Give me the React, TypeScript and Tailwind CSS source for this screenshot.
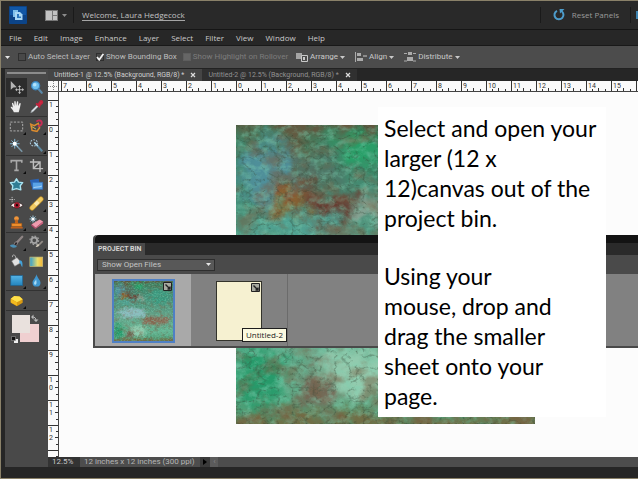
import React from 'react';
import clsx from 'clsx';

const MENUS = ['File', 'Edit', 'Image', 'Enhance', 'Layer', 'Select', 'Filter', 'View', 'Window', 'Help'];

type Tool = { name: string; more?: boolean; active?: boolean; icon: React.ReactNode };

const TOOL_GROUPS: Tool[][] = [
  [
    {
      name: 'Move', active: true, icon: (
        <>
          <path d="M2 1v10l2.800-2.500 4-.4z" fill="#b4b4b4" />
          <path d="M8 11h8M12 7v8" stroke="#c4c4c4" strokeWidth="1" />
          <path d="M12 6l1.800 2h-3.600zM12 16l1.800-2h-3.600zM7 11l2-1.800v3.600zM17 11l-2-1.800v3.600z" fill="#c4c4c4" />
        </>
      ),
    },
    {
      name: 'Zoom', icon: (
        <>
          <path d="M10.500 10l4 4.500" stroke="#5a88a8" strokeWidth="2.400" strokeLinecap="round" />
          <circle cx="7.500" cy="6.500" r="4.600" fill="#6fc0ee" stroke="#3a83bd" strokeWidth="1.400" />
          <circle cx="6.500" cy="5.500" r="2" fill="#b5e2fa" />
        </>
      ),
    },
    {
      name: 'Hand', icon: (
        <path d="M5.500 15C4.500 12.500 2.500 11 1.800 9.200c.8-.8 1.700-.3 2.700.8L3.300 5c.1-1 1.200-1 1.500-.1L6 8V3c.2-1 1.400-1 1.600 0l.4 4.600L9 3.200c.4-.9 1.500-.6 1.500.3L10.300 8l1.500-3c.6-.8 1.600-.3 1.400.6-.5 2.400-.7 4.700-1.500 6.900L11 15z" fill="#ededed" />
      ),
    },
    {
      name: 'Eyedropper', icon: (
        <>
          <path d="M9 7L3 13l-1 2.500L4.500 14.500l6-6z" fill="#dfe6ea" stroke="#8a9298" strokeWidth=".6" />
          <path d="M8 5l4.500 4.500M10 6.500l3-4c1-1.200 3 .4 2 1.900l-3.500 3.400z" fill="#d8304a" stroke="#c2233d" strokeWidth="1.800" />
        </>
      ),
    },
  ],
  [
    { name: 'Marquee', more: true, icon: <rect x="1.500" y="3.500" width="14" height="10" fill="none" stroke="#b8b8b8" strokeDasharray="2.500 1.500" /> },
    {
      name: 'Lasso', more: true, icon: (
        <>
          <path d="M2 6l4 1.500L10.500 5 12 10l-3 4-5.500-1z" fill="none" stroke="#dd8c2e" strokeWidth="1.700" />
          <path d="M8.500 3c2-2.500 6-1.500 6 1.500 0 2.500-2.500 3.500-4.500 3" fill="none" stroke="#c52e55" strokeWidth="2.200" />
          <path d="M3 8.500l5 3" stroke="#e8cb5a" strokeWidth="1" />
        </>
      ),
    },
    {
      name: 'Magic Wand', icon: (
        <>
          <path d="M7 7l8 8.500" stroke="#7b98a8" strokeWidth="1.800" />
          <path d="M6.500 1v11M1 6.500h11M2.800 2.800l7.400 7.400M10.200 2.800l-7.400 7.400" stroke="#8fd3f5" strokeWidth=".9" />
          <circle cx="6.500" cy="6.500" r="2.300" fill="#fff" />
        </>
      ),
    },
    {
      name: 'Quick Selection', more: true, icon: (
        <>
          <ellipse cx="5.500" cy="5.500" rx="4" ry="3.500" fill="none" stroke="#a9c8da" strokeWidth="1.200" strokeDasharray="2 1.300" />
          <path d="M6 5l9 10" stroke="#5d88a0" strokeWidth="2.400" />
          <path d="M6 5l4 4" stroke="#bfe0f2" strokeWidth="1.400" />
        </>
      ),
    },
  ],
  [
    { name: 'Type', more: true, icon: <path d="M2.500 5.500V3h12v2.500M8.500 3v11M6 14h5" fill="none" stroke="#a9a9a9" strokeWidth="1.800" /> },
    { name: 'Crop', more: true, icon: <path d="M5 1v11h11M1 4.500h11.500V16M5 12l7.500-7.500" fill="none" stroke="#bdbdbd" strokeWidth="1.600" /> },
    {
      name: 'Cookie Cutter', icon: (
        <path d="M8.500 2l2.200 3.800 4.800.6-2.800 3.500.7 4.700-4.900-1.500-4.900 1.500.7-4.700L1.500 6.400l4.800-.6z" fill="#2f7d94" stroke="#a9e3f1" strokeWidth="1.600" strokeLinejoin="round" />
      ),
    },
    {
      name: 'Straighten', icon: (
        <>
          <path d="M1 3.500l10-1.500 1 8-9 1z" fill="#2b63b3" />
          <path d="M4 6h11.500v8H4z" fill="#5aa3e6" stroke="#2f6cbc" strokeWidth=".8" />
          <path d="M5 11.500c3-1 6-.5 9.500-2V11c-3 1.200-6 .6-9.500 1.800z" fill="#a4d0f6" />
        </>
      ),
    },
    {
      name: 'Red Eye Removal', icon: (
        <>
          <path d="M3.500 1v6M.5 4h6" stroke="#d5d5d5" strokeWidth=".9" strokeDasharray="1.500 1" />
          <path d="M2 10.500C5 6.500 12.500 6.500 16 10.500 12.500 14.500 5 14.500 2 10.500z" fill="#f3e9e9" stroke="#2a1516" strokeWidth=".9" />
          <circle cx="9" cy="10.500" r="3.300" fill="#a3172b" />
          <circle cx="9" cy="10.500" r="1.300" fill="#1a0507" />
        </>
      ),
    },
    {
      name: 'Spot Healing Brush', more: true, icon: (
        <>
          <path d="M3.500 13.500l10-10" stroke="#b98b2a" strokeWidth="6" strokeLinecap="round" />
          <path d="M3.500 13.500l10-10" stroke="#f0ca62" strokeWidth="4.600" strokeLinecap="round" />
          <path d="M7 10l3.500-3.500" stroke="#fbe9ad" strokeWidth="4" />
        </>
      ),
    },
    {
      name: 'Clone Stamp', more: true, icon: (
        <>
          <circle cx="8.500" cy="4" r="2.700" fill="#f0953a" />
          <path d="M7.300 5h2.400l.8 5h-4z" fill="#c4661b" />
          <path d="M3 9.500h11.500V13H3z" fill="#ef8f2c" stroke="#a95511" strokeWidth=".6" />
          <path d="M2 14.500h13.500" stroke="#c9621b" strokeWidth="1.600" />
        </>
      ),
    },
    {
      name: 'Eraser', more: true, icon: (
        <>
          <path d="M3 10.500l9-5.500 4 2.500-8.500 7z" fill="#ee9aae" />
          <path d="M3 10.500l4.500 4-.4 1.500L2.500 12z" fill="#b6466a" />
          <path d="M7.500 14.500l8.500-7v2l-8.900 6.500z" fill="#d1607f" />
          <path d="M4.500.5v8M.5 4.500h8M1.700 1.700l5.600 5.600M7.300 1.700L1.700 7.300" stroke="#aee2fb" strokeWidth=".9" />
          <circle cx="4.500" cy="4.500" r="1.700" fill="#fff" />
        </>
      ),
    },
  ],
  [
    {
      name: 'Brush', more: true, icon: (
        <>
          <path d="M15 2L8.500 9" stroke="#8f8585" strokeWidth="2.600" strokeLinecap="round" />
          <path d="M9.500 8c1 2-1.500 5-4.500 4.500L7 8z" fill="#2c2629" stroke="#a7a0a0" strokeWidth=".7" />
          <path d="M1 12c3-2.500 6-.5 8 1.200-3 2-6.500 1.500-8-1.200z" fill="#4b8fb5" />
        </>
      ),
    },
    {
      name: 'Smart Brush', more: true, icon: (
        <>
          <circle cx="6" cy="6" r="3.200" fill="none" stroke="#a3a3a3" strokeWidth="2.200" />
          <circle cx="6" cy="6" r="4.900" fill="none" stroke="#a3a3a3" strokeWidth="1.300" strokeDasharray="1.900 1.900" />
          <path d="M15.500 7L11 11.500" stroke="#918b86" strokeWidth="2" />
          <path d="M11.500 10.500c.5 1.800-1.500 3.500-4 3l2-3z" fill="#d5cdbd" />
        </>
      ),
    },
    {
      name: 'Paint Bucket', icon: (
        <>
          <path d="M4 3.500c-1-3 3-3.500 3.500 0L8 8" fill="none" stroke="#b5b5b5" strokeWidth="1" />
          <path d="M3 8l6-4 5 5.500L6.500 14z" fill="#e1e1e1" stroke="#777" strokeWidth=".6" />
          <path d="M12 7c3.500 0 3.700 4 3 8-1.500-2-1.600-5-3.500-5.500z" fill="#43a2d9" />
        </>
      ),
    },
    { name: 'Gradient', icon: <rect x="1" y="3.500" width="14.500" height="10.500" fill="url(#tool-gradient)" stroke="#cbbf79" strokeWidth=".8" /> },
    { name: 'Rectangle', more: true, icon: <rect x="2" y="3" width="13.500" height="11" fill="url(#tool-rect)" stroke="#1e6594" strokeWidth=".8" /> },
    {
      name: 'Blur', more: true, icon: (
        <>
          <path d="M8.500 1.500C9.500 6 13 8 13 11.200a4.500 4.200 0 0 1-9 0C4 8 7.500 6 8.500 1.500z" fill="#3f96cf" />
          <path d="M8 7c-.5 2-2.300 2.700-2.300 4.500 0 1 .8 1.800 1.800 1.800 1.800-1 1-4 .5-6.300z" fill="#a7dcf8" />
        </>
      ),
    },
  ],
  [
    {
      name: 'Sponge', more: true, icon: (
        <>
          <path d="M2 6.500L6 3.500l6 .5 3.500 3V11L9 15 2 11z" fill="#d99a12" />
          <path d="M2 6.500L6 3.500l6 .5 3.500 3L9 10.500z" fill="#ffe14a" />
          <path d="M2 7v3.500l7 4V10.500z" fill="#f3bb1f" />
        </>
      ),
    },
  ],
];

const Caret = ({ className }: { className?: string }) => (
  <svg viewBox="0 0 5 3" className={clsx('h-[3px] w-[5px] shrink-0', className)}>
    <path d="M0 0h5L2.500 3z" fill="currentColor" />
  </svg>
);

type OptionProps = { label: string; checked?: boolean; disabled?: boolean };

const CheckOption = ({ label, checked, disabled }: OptionProps) => (
  <label className={clsx('flex items-center gap-0.5 whitespace-nowrap', disabled ? 'text-[#7c7c7c]' : 'text-[#bdbdbd]')}>
    <span className="relative flex size-2">
      <input
        type="checkbox"
        defaultChecked={checked}
        disabled={disabled}
        className={clsx('size-2 appearance-none border', disabled ? 'border-[#5e5e5e] bg-[#666]' : 'border-[#2f2f2f] bg-[#484848]')}
      />
      {checked && (
        <svg viewBox="0 0 8 8" className="pointer-events-none absolute inset-0 size-2">
          <path d="M1 4l2.200 2.800L7.500.8" fill="none" stroke="#f2f2f2" strokeWidth="1.700" />
        </svg>
      )}
    </span>
    {label}
  </label>
);

const DropButton = ({ label, children }: { label: string; children: React.ReactNode }) => (
  <button className="flex items-center gap-0.5 text-[#c9c9c9]">
    <svg viewBox="0 0 12 10" className="h-[10px] w-3">{children}</svg>
    {label}
    <Caret />
  </button>
);

const HorizontalRuler = () => (
  <svg className="h-[11px] w-full bg-[#fafafa] font-[Roboto,sans-serif]" aria-hidden="true">
    {Array.from({ length: 24 }, (_, i) => {
      const x = 13 + i * 25;
      return (
        <g key={i} stroke="#333" strokeWidth="1">
          <path d={`M${x + 0.5} 0v11M${x + 6.5} 8v3M${x + 12.5} 7v4M${x + 19.5} 8v3`} />
          {i < 23 && <text x={x + 2} y="7" fontSize="7" fill="#333" stroke="none">{Math.abs(i - 7)}</text>}
        </g>
      );
    })}
    <path d="M0 10.500h2000" stroke="#444" />
    <path d="M0 5.500h10M5.500 0v10" stroke="#888" strokeDasharray="1 1" />
    <path d="M10.500 0v11" stroke="#555" />
  </svg>
);

const VerticalRuler = () => (
  <svg className="w-[11px] shrink-0 self-stretch bg-[#fafafa] font-[Roboto,sans-serif]" aria-hidden="true">
    {Array.from({ length: 15 }, (_, i) => {
      const y = 8 + i * 25;
      return (
        <g key={i} stroke="#333" strokeWidth="1">
          <path d={`M0 ${y + 0.5}h11M8 ${y + 6.5}h3M7 ${y + 12.5}h4M8 ${y + 19.5}h3`} />
          {i < 14 && String(Math.abs(i - 1)).split('').map((digit, n) => (
            <text key={n} x="1" y={y + 7 + n * 8} fontSize="7" fill="#333" stroke="none">{digit}</text>
          ))}
        </g>
      );
    })}
    <path d="M10.500 0v2000" stroke="#444" />
  </svg>
);

// Mottled verdigris paper: soft colour patches roughened by noise.
const GrungePaper = ({ id, smooth, className }: { id: string; smooth?: boolean; className?: string }) => (
  <svg viewBox="0 0 300 300" preserveAspectRatio="none" className={className} aria-hidden="true">
    <defs>
      <linearGradient id={`${id}-base`} x1="0" y1="0" x2="0" y2="1">
        <stop offset="0" stopColor="#3f7f5c" />
        <stop offset=".25" stopColor="#458f78" />
        <stop offset=".6" stopColor="#64a389" />
        <stop offset=".85" stopColor="#64b592" />
        <stop offset="1" stopColor="#4b9a72" />
      </linearGradient>
      <filter id={`${id}-patch`} x="-20%" y="-20%" width="140%" height="140%" colorInterpolationFilters="sRGB">
        <feGaussianBlur stdDeviation="8" result="soft" />
        <feTurbulence type="fractalNoise" baseFrequency=".05" numOctaves="5" seed="4" />
        <feDisplacementMap in="soft" scale="40" xChannelSelector="R" yChannelSelector="G" />
      </filter>
      <filter id={`${id}-dark`} x="0" y="0" width="100%" height="100%" colorInterpolationFilters="sRGB">
        <feTurbulence type="turbulence" baseFrequency=".07 .09" numOctaves="5" seed="12" />
        <feColorMatrix values="0 0 0 0 .2  0 0 0 0 .27  0 0 0 0 .2  -4 0 0 0 .95" />
      </filter>
      <filter id={`${id}-rust`} x="0" y="0" width="100%" height="100%" colorInterpolationFilters="sRGB">
        <feTurbulence type="fractalNoise" baseFrequency=".04 .05" numOctaves="5" seed="31" />
        <feColorMatrix values="0 0 0 0 .48  0 0 0 0 .34  0 0 0 0 .24  0 4 0 0 -2" />
      </filter>
      <filter id={`${id}-light`} x="0" y="0" width="100%" height="100%" colorInterpolationFilters="sRGB">
        <feTurbulence type="fractalNoise" baseFrequency=".12 .15" numOctaves="4" seed="8" />
        <feColorMatrix values="0 0 0 0 .5  0 0 0 0 .82  0 0 0 0 .7  0 0 3 0 -1.300" />
      </filter>
    </defs>
    <rect width="300" height="300" fill={`url(#${id}-base)`} />
    <g filter={`url(#${id}-patch)`}>
      <ellipse cx="30" cy="50" rx="30" ry="34" fill="#4f8f9a" />
      <ellipse cx="126" cy="24" rx="26" ry="16" fill="#27a068" />
      <ellipse cx="62" cy="20" rx="14" ry="20" fill="#645a41" />
      <ellipse cx="80" cy="45" rx="30" ry="12" fill="#4f7568" />
      <ellipse cx="60" cy="104" rx="56" ry="10" fill="#50a598" />
      <ellipse cx="50" cy="76" rx="20" ry="14" fill="#91702f" />
      <ellipse cx="94" cy="80" rx="29" ry="13" fill="#6b342a" />
      <ellipse cx="68" cy="62" rx="14" ry="8" fill="#6e4331" />
      <ellipse cx="44" cy="73" rx="9" ry="7" fill="#8c3326" />
      <ellipse cx="136" cy="86" rx="16" ry="10" fill="#9aa99c" />
      <ellipse cx="90" cy="160" rx="75" ry="26" fill="#8dbcc0" />
      <ellipse cx="210" cy="198" rx="70" ry="20" fill="#8c6a55" />
      <ellipse cx="230" cy="80" rx="50" ry="35" fill="#3c9a80" />
      <ellipse cx="118" cy="250" rx="42" ry="28" fill="#92cbae" />
      <ellipse cx="24" cy="250" rx="24" ry="34" fill="#269a6a" />
      <ellipse cx="80" cy="262" rx="16" ry="24" fill="#736553" />
      <rect x="-20" y="-22" width="340" height="26" fill="#66503a" />
      <rect x="-20" y="292" width="340" height="26" fill="#746a42" />
    </g>
    <rect width="300" height="300" filter={`url(#${id}-light)`} opacity=".4" />
    <rect width="300" height="300" filter={`url(#${id}-rust)`} opacity={smooth ? '.3' : '.45'} />
    <rect width="300" height="300" filter={`url(#${id}-dark)`} opacity={smooth ? '.2' : '.5'} />
  </svg>
);

const ThumbBadge = () => (
  <svg viewBox="0 0 9 9" className="absolute top-px right-px size-[9px]">
    <path d="M.5.5h8v8h-8z" fill="#a9aaa0" stroke="#222" />
    <path d="M2.500 2.500l4 4M4.500 7h2.500V4.500" fill="none" stroke="#222" strokeWidth="1.400" />
  </svg>
);

const Toolbar = () => (
  <aside className="flex w-[43px] shrink-0 flex-col bg-[#494949] px-px">
    <div className="mx-px mt-[3px] mb-1 h-[2px] bg-[#8c8c8c]" />
    {TOOL_GROUPS.map((group, g) => (
      <div key={g} className="grid grid-cols-2 border-b border-[#323232]">
        {group.map((tool) => (
          <button
            key={tool.name}
            aria-label={tool.name}
            className={clsx('relative flex h-[19px] items-center justify-center', tool.active && 'bg-[#2c2c2c]')}
          >
            <svg viewBox="0 0 17 17" fill="none" className="size-[15px]">{tool.icon}</svg>
            {tool.more && (
              <svg viewBox="0 0 3 3" className="absolute right-px bottom-px size-[3px]"><path d="M3 0v3H0z" fill="#0c0c0c" /></svg>
            )}
          </button>
        ))}
      </div>
    ))}
    <svg viewBox="0 0 30 32" className="mt-[3px] ml-1 h-8 w-[30px]" role="img" aria-label="Colors">
      <path d="M10 10h19v18H10z" fill="#efcfd0" />
      <path d="M2 1h18v18H2z" fill="#e9e1dd" />
      <path d="M22 3c3 0 4 1 4 4" fill="none" stroke="#b8b8b8" />
      <path d="M23.500.5v5L21 3zM23.500 5.500h5L26 8z" fill="#b8b8b8" />
      <path d="M4 25h4v4H4z" fill="#eee" />
      <path d="M1.500 22.500h4v4h-4z" fill="#111" stroke="#999" strokeWidth=".6" />
    </svg>
  </aside>
);

const ProjectBin = () => (
  <section className="absolute top-[154px] right-0 left-[45px] rounded-tl-sm border-b-2 border-l-2 border-[#494949] bg-[#818181] font-[Roboto,sans-serif]">
    <div className="h-2 rounded-tl-sm bg-[#131313]" />
    <div className="flex h-3 bg-[#2a2a2a]">
      <h2 className="bg-[#494949] px-[3px] text-[7px] leading-3 font-bold text-[#d4d4d4]">PROJECT BIN</h2>
    </div>
    <div className="h-[19px] bg-[#4a4a4a] px-0.5 pt-1">
      <div className="relative w-[118px]">
        <select
          aria-label="Show"
          className="block h-3 w-full appearance-none border border-[#2e2e2e] bg-[#585858] px-1 text-[8px] leading-[10px] text-[#c4c4c4]"
        >
          <option>Show Open Files</option>
        </select>
        <Caret className="pointer-events-none absolute top-1 right-1 text-[#e6e6e6]" />
      </div>
    </div>
    <div className="flex h-[72px]">
      <div className="flex w-24 justify-center bg-[#a9a9a9] pt-[5px]">
        <div className="relative h-16 w-[63px] border-2 border-[#4f80c4]">
          <GrungePaper id="thumb" smooth className="size-full" />
          <ThumbBadge />
        </div>
      </div>
      <div className="relative flex w-[97px] justify-center border-r border-[#6b6b6b] pt-[7px]">
        <div className="relative h-[60px] w-[46px] border border-[#33332b] bg-[#f6f1d1]">
          <ThumbBadge />
        </div>
        <span className="absolute right-0 bottom-1 border border-[#1d1d1d] bg-[#fbfae0] px-[3px] font-['Open_Sans',sans-serif] text-[8px] leading-3 whitespace-nowrap text-[#222]">
          Untitled-2
        </span>
      </div>
    </div>
  </section>
);

const Workspace = () => (
  <div className="relative min-w-0 flex-1 bg-[#fcfcfc]">
    <GrungePaper id="page" className="absolute top-[33px] left-[177px] h-[299px] w-[299px]" />
  </div>
);

const Instructions = () => (
  <article className="absolute top-[26px] left-[330px] w-[228px] bg-white px-[6px] py-[6px] font-[Lato,sans-serif] text-[23px] leading-[30px] text-black">
    <p className="mb-7">Select and open your<br />larger (12 x<br />12)canvas out of the<br />project bin.</p>
    <p>Using your<br />mouse, drop and<br />drag the smaller<br />sheet onto your<br />page.</p>
  </article>
);

const DocumentTab = ({ title, active }: { title: string; active?: boolean }) => (
  <div className={clsx('flex items-center gap-1.5 px-1.5', active ? 'bg-[#454545] text-[#cfcfcf]' : 'bg-[#303030] text-[#929292]')}>
    <button className="whitespace-nowrap">{title}</button>
    <button aria-label="Close">
      <svg viewBox="0 0 6 6" className="size-[6px]"><path d="M1 1l4 4M5 1L1 5" stroke="#ddd" strokeWidth="1.200" /></svg>
    </button>
  </div>
);

export default function App() {
  return (
    <div className="flex min-h-screen flex-col overflow-hidden border-t border-b border-l border-[#8a8169] bg-[#262626] font-['Open_Sans',sans-serif] text-[8px]">
      <svg className="absolute size-0" aria-hidden="true">
        <defs>
          <linearGradient id="tool-gradient">
            <stop offset="0" stopColor="#2d9bd2" /><stop offset=".6" stopColor="#e8dc6a" /><stop offset="1" stopColor="#f4b234" />
          </linearGradient>
          <linearGradient id="tool-rect" x2="0" y2="1">
            <stop offset="0" stopColor="#55b4e6" /><stop offset="1" stopColor="#2384bd" />
          </linearGradient>
        </defs>
      </svg>

      <header className="flex h-7 items-center bg-[#292929] pl-2">
        <svg viewBox="0 0 18 18" className="size-[18px]" role="img" aria-label="Photoshop Elements">
          <rect width="18" height="18" rx="1" fill="#0c4488" />
          <rect x="1" y="1" width="16" height="8" fill="#1157a6" />
          <path d="M4 4h5v2H6v5H4z" fill="#7fc0ea" />
          <path d="M6 6h5l2.500 2.500V14H6z" fill="#a9d8f5" />
          <path d="M8 8h2v2.500h2V12H8z" fill="#2c78bf" />
        </svg>
        <button aria-label="Layout" className="ml-[18px] flex items-center gap-1 text-[#8c8c8c]">
          <svg viewBox="0 0 13 11" className="h-[11px] w-[13px]">
            <path d="M0 0h13v11H0z" fill="#777" /><path d="M1 1h6v9H1zM8 1h4v4H8zM8 6h4v4H8z" fill="#c2c2c2" />
          </svg>
          <Caret />
        </button>
        <span className="mr-2 ml-[6px] h-4 w-px bg-[#1a1a1a]" />
        <a href="#account" className="border-b border-[#a5a5a5] text-[8px] leading-[10px] text-[#c2c2c2]">Welcome, Laura Hedgecock</a>
        <div className="ml-auto flex items-center gap-[7px] border-l border-[#1a1a1a] pl-3">
          <svg viewBox="0 0 12 12" className="size-3">
            <path d="M4 1.800A4.500 4.500 0 1 0 8.300 2" fill="none" stroke="#4d9ccb" strokeWidth="2" />
            <path d="M6.500 0h5L7 4.500z" fill="#4d9ccb" />
          </svg>
          <button className="text-[#9b9b9b]">Reset Panels</button>
          <div className="flex items-center gap-[5px]">
            <span className="ml-1 h-4 w-px bg-[#1a1a1a]" />
            <span className="h-2 w-[2px] bg-[#3d83b0]" />
          </div>
        </div>
      </header>

      <nav className="flex h-4 items-center gap-3 border-t border-[#151515] bg-[#272727] pl-2 text-[8px] text-[#c9c9c9]">
        {MENUS.map((menu) => <button key={menu}>{menu}</button>)}
      </nav>

      <div className="flex h-[23px] items-center border-t border-[#191919] bg-[#4c4c4c] pr-3 pl-1 font-[Roboto,sans-serif]">
        <Caret className="mr-2 text-[#e6e6e6]" />
        <div className="flex items-center gap-1.5">
          <CheckOption label="Auto Select Layer" />
          <CheckOption label="Show Bounding Box" checked />
          <CheckOption label="Show Highlight on Rollover" disabled />
        </div>
        <div className="ml-2 flex items-center gap-[10px]">
          <DropButton label="Arrange">
            <path d="M0 1h6v6H0z" fill="#a5a5a5" /><path d="M5.500 3.500h6v6h-6z" fill="#4c4c4c" stroke="#c9c9c9" /><path d="M7 5h2v3H7z" fill="#c9c9c9" />
          </DropButton>
          <DropButton label="Align">
            <path d="M.5 0v10" stroke="#ababab" /><path d="M2 1h4v3H2zM2 6h6v3H2z" fill="#ababab" /><path d="M8 4h4" stroke="#c9c9c9" />
          </DropButton>
          <DropButton label="Distribute">
            <path d="M0 1.500h3M0 9h3M9 1.500h3M9 9h3" stroke="#ababab" /><path d="M4 0h4v3H4zM3 5h6v4H3z" fill="#ababab" />
          </DropButton>
        </div>
      </div>

      <div className="flex flex-1 border-t border-[#222] pl-1">
        <Toolbar />
        <main className="flex min-w-0 flex-1 flex-col">
          <div className="flex h-3 font-[Roboto,sans-serif] text-[7px]">
            <DocumentTab title="Untitled-1 @ 12.5% (Background, RGB/8) *" active />
            <DocumentTab title="Untitled-2 @ 12.5% (Background, RGB/8) *" />
          </div>
          <div className="relative flex flex-1 flex-col">
            <HorizontalRuler />
            <div className="flex flex-1">
              <VerticalRuler />
              <Workspace />
            </div>
            <ProjectBin />
            <Instructions />
          </div>
          <footer className="flex h-[10px] items-center bg-[#4d4d4d] font-[Roboto,sans-serif] text-[8px] text-[#c9c9c9]">
            <span className="flex h-full w-8 items-center bg-[#333] pl-1">12.5%</span>
            <span className="pr-1.5 pl-1 text-[#b5b5b5]">12 inches x 12 inches (300 ppi)</span>
            <button aria-label="Status menu" className="flex h-full w-[10px] items-center justify-center bg-[#3a3a3a]">
              <svg viewBox="0 0 4 6" className="h-[6px] w-1"><path d="M0 0l4 3-4 3z" fill="#000" /></svg>
            </button>
            <span className="flex h-full w-2 items-center justify-center bg-[#5b5b5b] text-[#888]">‹</span>
          </footer>
        </main>
      </div>
      <div className="h-[11px] bg-[#262626]" />
    </div>
  );
}
